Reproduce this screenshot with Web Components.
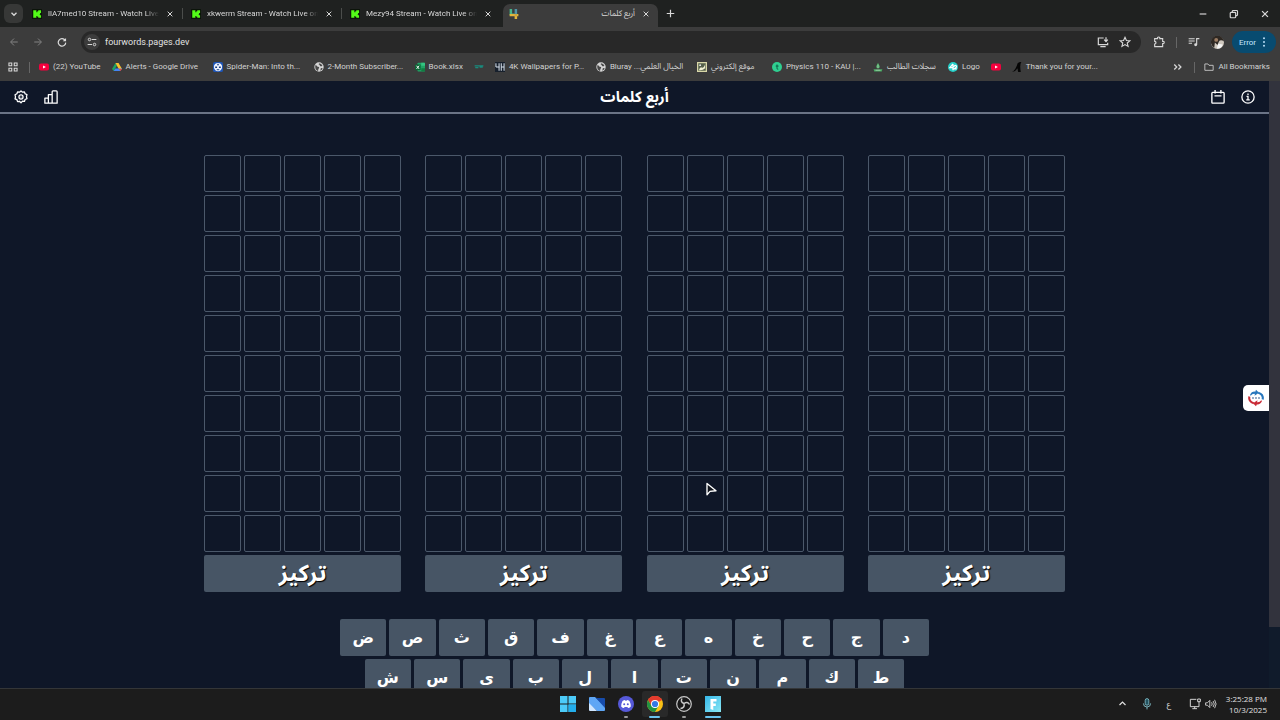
<!DOCTYPE html>
<html lang="en">
<head>
<meta charset="utf-8">
<title>أربع كلمات</title>
<style>
html,body{margin:0;height:100%}
body{font-family:"Open Sans","Noto Sans Arabic","DejaVu Sans",sans-serif;background:#0f172a;overflow:hidden}
</style>
</head>
<body>
<desktop-screen></desktop-screen>
<script>
const ICONS = {
  down:['0 0 12 12','<path d="M3 4.5l3 3 3-3" fill="none" stroke="currentColor" stroke-width="1.6"/>'],
  up:['0 0 12 12','<path d="M2 8l4-4 4 4" fill="none" stroke="currentColor" stroke-width="1.6"/>'],
  close:['0 0 12 12','<path d="M2.5 2.5l7 7m0-7l-7 7" stroke="currentColor" stroke-width="1.5"/>'],
  plus:['0 0 12 12','<path d="M6 1v10M1 6h10" stroke="currentColor" stroke-width="1.6"/>'],
  min:['0 0 12 12','<path d="M2 6h8" stroke="currentColor" stroke-width="1.4"/>'],
  restore:['0 0 12 12','<g fill="none" stroke="currentColor" stroke-width="1.4"><rect x="1.5" y="4" width="6.5" height="6.5" rx="1"/><path d="M4 4V2.8Q4 1.8 5 1.8h4.200q1 0 1 1v4.200q0 1-1 1H8"/></g>'],
  kick:['0 0 16 16','<rect width="16" height="16" rx="1" fill="#0b1409"/><path d="M2 2h5v3h1.500V3.500H10V2h4.500v4.500H13V8h-1.500v.5H13v1.500h1.500V14H10v-1.500H8.500V11H7v3H2z" fill="#53fc18"/>'],
  four:['0 0 16 16','<path d="M1 0h4v7h4v3H1z" fill="#47b58b"/><path d="M9 0h4v8H9z" fill="#4f93a8"/><path d="M1 8h14v3.500h-2V16H9v-4.500H1z" fill="#e2b53c"/><path d="M9 8h4v3.500H9z" fill="#c9a344"/>'],
  back:['0 0 16 16','<path d="M14 8H3M8 2.500L2.500 8 8 13.500" fill="none" stroke="currentColor" stroke-width="1.6"/>'],
  forward:['0 0 16 16','<path d="M2 8h11M8 2.500L13.500 8 8 13.500" fill="none" stroke="currentColor" stroke-width="1.6"/>'],
  reload:['0 0 16 16','<path d="M13 5.300A6 6 0 1 0 14 9" fill="none" stroke="currentColor" stroke-width="1.9"/><path d="M14.500 1.500v5.300H9.200z" fill="currentColor"/>'],
  tune:['0 0 16 16','<g fill="none" stroke="currentColor" stroke-width="1.6"><path d="M7.500 4H15M1 12h7"/><circle cx="4" cy="4" r="2"/><circle cx="12" cy="12" r="2"/></g>'],
  install:['0 0 18 16','<g fill="none" stroke="currentColor" stroke-width="1.8"><path d="M10 2H2v10h14V9M5 15h8M13.500 1v6M10.800 4.500l2.700 2.800 2.700-2.800"/></g>'],
  star:['0 0 16 16','<path d="M8 1.800l1.900 4.200 4.600.4-3.500 3 1.100 4.500L8 11.500l-4.100 2.400L5 9.400l-3.500-3L6.100 6z" fill="none" stroke="currentColor" stroke-width="1.5"/>'],
  puzzle:['0 0 18 18','<path d="M2.500 4h4.300q-.3-2.500 1.700-2.500T10.200 4h4.300v4q2.300-.2 2.300 1.700T14.500 11.500v4.500h-12v-4q2-.3 2-2t-2-2z" fill="none" stroke="currentColor" stroke-width="1.7"/>'],
  music:['0 0 18 16','<path d="M1 3h9M1 6.500h9M1 10h5" stroke="currentColor" stroke-width="1.6"/><circle cx="11.500" cy="12" r="2.200" fill="currentColor"/><path d="M13 12V3h4" fill="none" stroke="currentColor" stroke-width="1.700"/>'],
  avatar:['0 0 20 20','<circle cx="10" cy="10" r="10" fill="#cfc8bf"/><path d="M0 11A10 10 0 0 1 20 8Q14 5 12 9L10 14 6 10 5 18Q1 15 0 11z" fill="#2e2823"/><circle cx="8" cy="6" r="3" fill="#9a7b62"/><path d="M9 19l2-7 7 1q-2 7-9 6z" fill="#f5f5f5"/>'],
  dots:['0 0 4 16','<g fill="currentColor"><circle cx="2" cy="2" r="1.500"/><circle cx="2" cy="8" r="1.500"/><circle cx="2" cy="14" r="1.500"/></g>'],
  apps:['0 0 16 16','<g fill="none" stroke="currentColor" stroke-width="1.700"><path d="M1.500 1.500h4.500v4.500H1.500zM10 1.500h4.500v4.500H10zM1.500 10h4.500v4.500H1.500zM10 10h4.500v4.500H10z"/></g>'],
  youtube:['0 0 16 16','<rect y="2.500" width="16" height="11" rx="3" fill="#f5003d"/><path d="M6.500 5.500v5L11 8z" fill="#fff"/>'],
  drive:['0 0 16 16','<path d="M5.500 1.500L0 11l2.700 3.500L8 5.500z" fill="#1ea362"/><path d="M5.500 1.500h5L16 11h-5.200z" fill="#fbc02d"/><path d="M5.300 10.500H16l-2.700 4H2.700z" fill="#4285f4"/><path d="M10.800 11H16l-2.700 3.500z" fill="#ea4335"/>'],
  spider:['0 0 16 16','<rect width="16" height="16" rx="3" fill="#1f55b5"/><circle cx="8" cy="8" r="6.600" fill="#eef4ff"/><circle cx="8" cy="4.200" r="1.300" fill="#173b80"/><path d="M3.500 7h3v2.500h-3zM9.500 7h3v2.500h-3zM6 11.500h4V13H6z" fill="#173b80"/>'],
  globe:['0 0 16 16','<circle cx="8" cy="8" r="7.500" fill="#d5d5d5"/><path d="M2 5q3 0 3 2l3 1q1 2-1 3l-.5 3.500Q2 13 2 8zM8 1.800q4 0 5.500 4Q11 8 9.500 6q-.5-2-2-2zM11 9.500l3 .5q-1 3-4 4z" fill="#484848"/>'],
  excel:['0 0 16 16','<rect x="4" y="1" width="12" height="14" rx="1" fill="#21a366"/><path d="M10 1h5q1 0 1 1v4h-6z" fill="#33c481"/><path d="M10 10h6v5h-6z" fill="#107c41"/><rect y="4" width="9" height="9" fill="#0c6535"/><path d="M2.500 6l4 5m0-5l-4 5" stroke="#fff" stroke-width="1.500"/>'],
  wave:['0 0 16 16','<path d="M1 6h14M2 9h5m2-1h5" stroke="#188b7d" stroke-width="2" fill="none"/>'],
  fourk:['0 0 16 16','<rect width="16" height="16" fill="#17202c"/><path d="M1.500 2v6H7M6.500 2v12M10 2v12M14.500 2v12M10 8h4.500" fill="none" stroke="#dce5f0" stroke-width="1.600"/>'],
  site:['0 0 16 16','<rect width="16" height="16" fill="#d9d7a8"/><path d="M2 2h12v12H2z" fill="#55604b"/><path d="M3 13q2-6 5-4 3 1 5-6v7q-4 4-10 3z" fill="#f0efd2"/><circle cx="5" cy="5" r="1.500" fill="#eee"/>'],
  physics:['0 0 16 16','<circle cx="8" cy="8" r="8" fill="#2fcf91"/><path d="M8 4v6q0 2 2 1.500M6 6.500h4.500" fill="none" stroke="#0b5e45" stroke-width="1.600"/>'],
  student:['0 0 16 16','<path d="M8 1l3 6-1 3H6L5 7zM1 11l4 1h6l4-1-1 4H2z" fill="#48a862"/><path d="M8 4v6M4 13h8" stroke="#d4edd7"/>'],
  logo:['0 0 16 16','<circle cx="8" cy="8" r="8" fill="#24cfc8"/><path d="M8 3L3 9h5v4M8 3v10M9 8q2-4 4-2t-3 5h4" fill="none" stroke="#fff" stroke-width="2"/>'],
  arch:['0 0 16 16','<path d="M0 16Q6 13 9 2q2-2 6-2-3 3-1 16h-4q-1-3-1-6-3 5-9 6z" fill="#050505"/>'],
  chevrons:['0 0 12 12','<path d="M1.500 3l3 3-3 3M6.500 3l3 3-3 3" fill="none" stroke="currentColor" stroke-width="1.500"/>'],
  folder:['0 0 18 16','<path d="M1.500 2.500H7L9 5h7.500v9h-15z" fill="none" stroke="currentColor" stroke-width="1.500"/>'],
  gear:['0 0 24 24','<g fill="none" stroke="currentColor" stroke-width="2.200"><path stroke-linejoin="round" d="M12 1.500l2.500 2.300 3.400-.6 1.100 3.300 3.200 1.500-.8 3.400.8 3.400-3.200 1.500-1.100 3.300-3.400-.6L12 22l-2.500-2.700-3.400.6L5 16.600l-3.200-1.500.8-3.400L1.800 8.200 5 6.500l1.100-3.300 3.400.6z"/><circle cx="12" cy="12" r="3.500"/></g><circle cx="12" cy="12" r="1" fill="currentColor"/>'],
  bars:['0 0 24 24','<path d="M1.500 14h6v8.500h-6zM7.500 8h6.500v14.500H7.500zM14 3q0-1.500 1.500-1.500H21Q22.500 1.500 22.500 3v19.500H14z" fill="none" stroke="currentColor" stroke-width="2.200" stroke-linejoin="round"/>'],
  calendar:['0 0 24 24','<path d="M3 4h18q1.500 0 1.500 1.500V21q0 1.500-1.500 1.500H3Q1.500 22.500 1.500 21V5.500Q1.500 4 3 4zM7 0v6M17 0v6M6 10h12" fill="none" stroke="currentColor" stroke-width="2.300"/>'],
  info:['0 0 24 24','<circle cx="12" cy="12" r="10.500" fill="none" stroke="currentColor" stroke-width="2.200"/><path d="M9.500 11H12v6M9 17h6M12 6v2.500" fill="none" stroke="currentColor" stroke-width="2.200"/>'],
  translate:['0 0 24 24','<path d="M4 8Q6 3 11 3.500l1-2.500 4 4-6 4 .5-2.500Q7 6 5 9z" fill="#2877bd"/><path d="M15 5q7 2 6 9" fill="none" stroke="#2877bd" stroke-width="2.800"/><path d="M20 16q-2 5-7 4.500L12 23l-4-4 6-4-.5 2.500Q17 18 19 15z" fill="#c92b36"/><path d="M9 19Q2 17 3 10" fill="none" stroke="#c92b36" stroke-width="2.800"/><path d="M7 12h2m2 0h2m2 0h2" stroke="#4d6f9e" stroke-width="2"/>'],
  cursor:['0 0 16 20','<path d="M2 2v15l4-4.500 8-.8z" fill="#10141c" stroke="#fff" stroke-width="1.800" stroke-linejoin="round"/>'],
  windows:['0 0 16 16','<path d="M0 0h7.500v7.500H0zM8.500 0H16v7.500H8.500zM0 8.500h7.500V16H0zM8.500 8.500H16V16H8.500z" fill="#4ccbf8"/><path d="M8.500 8.500H16V16H8.500z" fill="#23aeeb"/>'],
  files:['0 0 16 16','<path d="M0 2q0-1 1-1h5l10 9v4q0 1-1 1H8L0 8z" fill="#5ea6f5"/><path d="M6 1l2 1h7q1 0 1 1v9z" fill="#174cab"/><path d="M0 7l8 8H1q-1 0-1-1z" fill="#cfe6ff"/>'],
  discord:['0 0 16 16','<circle cx="8" cy="8" r="8" fill="#5659d9"/><path d="M4.500 5q1.500-1 2.500-1l.4.700h1.200L9 4q1 0 2.500 1 1.500 3 1.300 5.500Q11.500 12 10 12l-.6-1H6.600L6 12q-1.500 0-2.800-1.500Q3 8 4.500 5z" fill="#fff"/><circle cx="6.200" cy="8.300" r="1" fill="#5659d9"/><circle cx="9.800" cy="8.300" r="1" fill="#5659d9"/>'],
  chrome:['0 0 16 16','<circle cx="8" cy="8" r="8" fill="#fbc116"/><path d="M8 8L1.070 4A8 8 0 0 1 14.930 4z" fill="#e33b2e"/><path d="M8 4h6.930A8 8 0 0 0 1.070 4L4.500 10z" fill="#e33b2e"/><path d="M1.070 4A8 8 0 0 0 8 16l3.460-6L8 8 4.540 10z" fill="#229342"/><circle cx="8" cy="8" r="4" fill="#fff"/><circle cx="8" cy="8" r="3.100" fill="#3578e5"/>'],
  obs:['0 0 16 16','<circle cx="8" cy="8" r="7.300" fill="#191919" stroke="#c9c9c9" stroke-width="1.200"/><g fill="none" stroke="#c9c9c9" stroke-width="1.500"><path d="M6 2.500Q4 6 8 7.500M13.500 8.500Q11.500 5 8 7.500M4.500 12.500Q9 12 8 7.500"/></g>'],
  fapp:['0 0 16 16','<defs><linearGradient id="a" x2="1" y2="1"><stop stop-color="#35b7e8"/><stop offset="1" stop-color="#8ae8f5"/></linearGradient></defs><path d="M0 0h16v16H0z" fill="url(#a)"/><path d="M5.500 3h6v2.500H8.300v2h2.500V10H8.300v4l-2.800-1z" fill="#fff"/>'],
  mic:['0 0 16 20','<rect x="5" y="1" width="6" height="11" rx="3" fill="#23525f" stroke="#82bfcb" stroke-width="1.400"/><path d="M2 9q0 6 6 6t6-6M8 15v4" fill="none" stroke="#82bfcb" stroke-width="1.500"/>'],
  monitor:['0 0 18 18','<g fill="none" stroke="currentColor" stroke-width="1.400"><path d="M11 2H2v11h13V8M5 16h7M8.500 13v3"/><path d="M13 1.500h4v4h-4zM15 5.500V8"/></g>'],
  sound:['0 0 20 16','<g fill="none" stroke="currentColor" stroke-width="1.400"><path d="M1 6h3l4-4v12l-4-4H1zM11 5q2 3 0 6M13.500 3q4 5 0 10M16 1q5 7 0 14"/></g>']
};

class BaseElement extends HTMLElement {
  constructor(){
    super();
    this.attachShadow({mode:'open'});
  }
  connectedCallback(){
    this.shadowRoot.innerHTML = `<style>*{box-sizing:border-box}button,a,input{font:inherit;color:inherit;background:none;border:0;padding:0;margin:0;text-decoration:none}button{display:flex;align-items:center;justify-content:center}${this.styles()}</style>${this.markup()}`;
  }
}
const icon = (n, size=10) => `<ui-icon name="${n}" size="${size}"></ui-icon>`;

customElements.define('ui-icon', class extends BaseElement {
  styles(){ return `:host{display:inline-flex;flex:none;width:${this.getAttribute('size')}px;height:${this.getAttribute('size')}px}svg{width:100%;height:100%}`; }
  markup(){ const [box, body] = ICONS[this.getAttribute('name')]; return `<svg viewBox="${box}" aria-hidden="true">${body}</svg>`; }
});

customElements.define('browser-tab', class extends BaseElement {
  styles(){ return `
    :host{display:flex;align-items:center;box-sizing:border-box;position:relative;flex:0 1 159px;min-width:0;height:23px;padding:0 10px 4px 6px;gap:6px;color:#d8d8d8;font-size:8px}
    :host([active]){flex-basis:155px;padding-right:7px;background:#3c3c3c;border-radius:7px 7px 0 0}
    :host(:not([active]):not([last]))::after{content:"";position:absolute;right:2px;top:4px;width:1px;height:11px;background:#4b4d4b}
    .title{flex:1;min-width:0;overflow:hidden;white-space:nowrap;line-height:12px;text-align:left}
    :host(:not([active])) .title{-webkit-mask-image:linear-gradient(90deg,#000 88%,transparent)}
    :host([active]) .title{text-align:right}
    .close{width:10px;height:10px}`; }
  markup(){ return `${icon(this.getAttribute('icon'))}<span class="title"><slot></slot></span><button class="close" aria-label="Close tab">${icon('close',8)}</button>`; }
});

customElements.define('book-mark', class extends BaseElement {
  styles(){ return `
    :host{display:block;flex:none}
    a{display:flex;align-items:center;gap:4px;color:#d2d2d2;font-size:8px;line-height:12px;white-space:nowrap}
    :host([long]) .label{width:76px}
    :host([arabic]) .label{min-width:50px}
    :host([bare]) .label{display:none}`; }
  markup(){ return `<a href="#" aria-label="${this.getAttribute('icon')}">${icon(this.getAttribute('icon'))}<span class="label"><slot></slot></span></a>`; }
});

customElements.define('browser-chrome', class extends BaseElement {
  styles(){ return `
    :host{display:block;background:#3c3c3c;color:#d8d8d8;font-family:Roboto,"Noto Sans Arabic","DejaVu Sans",sans-serif}
    .strip{display:flex;align-items:flex-end;height:27px;background:#1f2120}
    .search{width:19px;height:19px;margin:4px 3px 4px 4px;border-radius:6px;background:#373837}
    .new{width:24px;height:27px}
    .tabs{display:flex;flex:0 1 632px;min-width:0}
    .win{display:flex;margin-left:auto}
    .win button{width:31px;height:27px}
    .bar{display:flex;align-items:center;height:30px;padding:0 6px 0 2px}
    .nav{display:flex;color:#ddd}
    .nav button{width:24px;height:20px}
    .nav .off{color:#828282}
    .url{display:flex;align-items:center;flex:1;height:22px;margin-left:7px;padding:0 10px 0 3px;border-radius:11px;background:#282828;gap:10px}
    .url input{flex:1;min-width:0;font-size:9px;color:#e3e3e3;margin-left:-5px}
    .tune{width:16px;height:16px;border-radius:8px;background:#3c3c3c}
    .right{display:flex;align-items:center;gap:11px;padding-left:12px}
    .sep{width:1px;height:11px;background:#666;flex:none}
    .error{width:44px;height:22px;margin-left:-3px;margin-right:-2px;gap:3px;border-radius:11px;background:#084b70;color:#c6e7ff;font-size:8px}
    .marks{display:flex;align-items:center;height:24px;padding:0 10px 4px 8px;gap:11px}
    .marks .sep{margin-right:-2px}
    .more{margin-left:auto}`; }
  markup(){ return `
    <div class="strip">
      <button class="search" aria-label="Search tabs">${icon('down')}</button>
      <div class="tabs">
        <browser-tab icon="kick">llA7med10 Stream - Watch Live</browser-tab>
        <browser-tab icon="kick">xkwerm Stream - Watch Live on</browser-tab>
        <browser-tab icon="kick" last>Mezy94 Stream - Watch Live on</browser-tab>
        <browser-tab icon="four" active>أربع كلمات</browser-tab>
      </div>
      <button class="new" aria-label="New tab">${icon('plus',9)}</button>
      <div class="win"><button aria-label="Minimize">${icon('min')}</button><button aria-label="Restore">${icon('restore')}</button><button aria-label="Close">${icon('close')}</button></div>
    </div>
    <div class="bar">
      <div class="nav"><button class="off" aria-label="Back">${icon('back')}</button><button class="off" aria-label="Forward">${icon('forward')}</button><button aria-label="Reload">${icon('reload')}</button></div>
      <div class="url"><button class="tune" aria-label="Site information">${icon('tune')}</button><input aria-label="Address" value="fourwords.pages.dev">${icon('install',12)}${icon('star',12)}</div>
      <div class="right">${icon('puzzle',12)}<span class="sep"></span>${icon('music',12)}${icon('avatar',13)}<button class="error">Error ${icon('dots')}</button></div>
    </div>
    <nav class="marks">
      ${icon('apps')}<span class="sep"></span>
      <book-mark icon="youtube">(22) YouTube</book-mark>
      <book-mark icon="drive" long>Alerts - Google Drive</book-mark>
      <book-mark icon="spider" long>Spider-Man: Into th...</book-mark>
      <book-mark icon="globe" long>2-Month Subscriber...</book-mark>
      <book-mark icon="excel">Book.xlsx</book-mark>
      <book-mark icon="wave" bare></book-mark>
      <book-mark icon="fourk" long>4K Wallpapers for P...</book-mark>
      <book-mark icon="globe" long>Bluray ...الخيال العلمي</book-mark>
      <book-mark icon="site" arabic>موقع إلكتروني</book-mark>
      <book-mark icon="physics" long>Physics 110 - KAU |...</book-mark>
      <book-mark icon="student" arabic>سجلات الطالب</book-mark>
      <book-mark icon="logo">Logo</book-mark>
      <book-mark icon="youtube" bare></book-mark>
      <book-mark icon="arch" long>Thank you for your...</book-mark>
      <button class="more" aria-label="More bookmarks">${icon('chevrons',10)}</button><span class="sep"></span>
      <book-mark icon="folder">All Bookmarks</book-mark>
    </nav>`; }
});

customElements.define('game-header', class extends BaseElement {
  styles(){ return `
    :host{display:grid;grid-template-columns:1fr auto 1fr;align-items:center;box-sizing:border-box;height:33px;padding:0 14px;border-bottom:2px solid #6b7486;color:#fff}
    h1{margin:0;padding-bottom:2px;font-size:15px;line-height:20px;font-weight:700}
    div{display:flex;gap:16px}
    .end{justify-content:flex-end}`; }
  markup(){ return `
    <div><button aria-label="Settings">${icon('gear',14)}</button><button aria-label="Statistics">${icon('bars',14)}</button></div>
    <h1 dir="rtl"><slot></slot></h1>
    <div class="end"><button aria-label="Calendar">${icon('calendar',14)}</button><button aria-label="Information">${icon('info',14)}</button></div>`; }
});

customElements.define('game-board', class extends BaseElement {
  styles(){ return `
    :host{display:grid;grid-template-columns:repeat(5,1fr);grid-auto-rows:37px;gap:3px}
    i{border:1px solid #4b586a;border-radius:2px}
    button{grid-column:1/-1;padding-bottom:4px;border-radius:2px;background:#475565;color:#fff;font-size:23px;font-weight:700;line-height:28px;text-shadow:1px 1px 1px #000}`; }
  markup(){ return '<i></i>'.repeat(50) + '<button><slot></slot></button>'; }
});

customElements.define('game-keyboard', class extends BaseElement {
  styles(){ return `
    :host{display:flex;flex-direction:column;gap:3px;width:100%;max-width:589px;margin:0 auto;font-family:"DejaVu Sans",sans-serif}
    div{display:flex;justify-content:center;gap:3px}
    button{flex:0 0 calc((100% - 33px) / 12);height:37px;border-radius:2px;background:#475565;color:#fff;font-size:16px;font-weight:700;line-height:24px}`; }
  markup(){ return ['ضصثقفغعهخحجد','شسىبلاتنمكط'].map(r => `<div>${[...r].map(k => `<button>${k}</button>`).join('')}</div>`).join(''); }
});

customElements.define('game-page', class extends BaseElement {
  styles(){ return `
    :host{display:grid;grid-template-columns:minmax(0,1fr) 11px;position:relative;overflow:hidden;background:#0f1728}
    main{min-height:0;overflow:hidden;position:relative}
    .boards{display:grid;grid-template-columns:repeat(4,1fr);gap:24px;max-width:861px;margin:41px auto 27px}
    .track{background:#101b2b}
    .thumb{height:90%;background:#32333d}
    .translate{position:absolute;right:0;top:304px;width:26px;height:26px;border-radius:5px 0 0 5px;background:#fff}
    .pointer{position:absolute;left:704px;top:399px}`; }
  markup(){ return `
    <main>
      <game-header>أربع كلمات</game-header>
      <div class="boards">${'<game-board>تركيز</game-board>'.repeat(4)}</div>
      <game-keyboard></game-keyboard>
      <button class="translate" aria-label="Translate">${icon('translate',18)}</button>
    </main>
    <div class="track"><div class="thumb"></div></div>
    <span class="pointer">${icon('cursor',15)}</span>`; }
});

customElements.define('task-bar', class extends BaseElement {
  styles(){ return `
    :host{display:grid;grid-template-columns:1fr auto 1fr;align-items:center;box-sizing:border-box;height:32px;border-top:1px solid #343638;background:#1c1c1c;color:#e0e0e0;font-size:8px;line-height:11px}
    .apps{grid-column:2;display:flex;gap:3px;padding-bottom:2px}
    .apps button{position:relative;width:26px;height:26px;border-radius:3px}
    .apps .on{background:#292929}
    .apps .run::after{content:"";position:absolute;bottom:-1px;width:4px;height:2px;border-radius:1px;background:#999}
    .apps .on::after{width:11px;background:#69c4ef}
    .apps .wide::after{width:16px;background:#69c4ef}
    .tray{display:flex;align-items:center;justify-content:flex-end;padding:0 13px 2px 0;gap:14px}
    .net{display:flex;gap:4px;padding-left:4px}
    time{text-align:right;margin-left:-5px}`; }
  markup(){ return `
    <div class="apps"><button aria-label="Start">${icon('windows',16)}</button><button aria-label="Files">${icon('files',16)}</button><button class="run" aria-label="Discord">${icon('discord',16)}</button><button class="run on" aria-label="Chrome">${icon('chrome',16)}</button><button class="run" aria-label="OBS">${icon('obs',16)}</button><button class="run wide" aria-label="Game">${icon('fapp',16)}</button></div>
    <div class="tray">${icon('up',9)}${icon('mic',12)}<span>ع</span><span class="net">${icon('monitor',12)}${icon('sound',12)}</span><time datetime="2025-10-03T15:25:28">3:25:28 PM<br>10/3/2025</time></div>`; }
});

customElements.define('desktop-screen', class extends BaseElement {
  styles(){ return `:host{display:grid;grid-template-rows:auto minmax(0,1fr) auto;height:100vh}`; }
  markup(){ return `<browser-chrome></browser-chrome><game-page></game-page><task-bar></task-bar>`; }
});
</script>
</body>
</html>
